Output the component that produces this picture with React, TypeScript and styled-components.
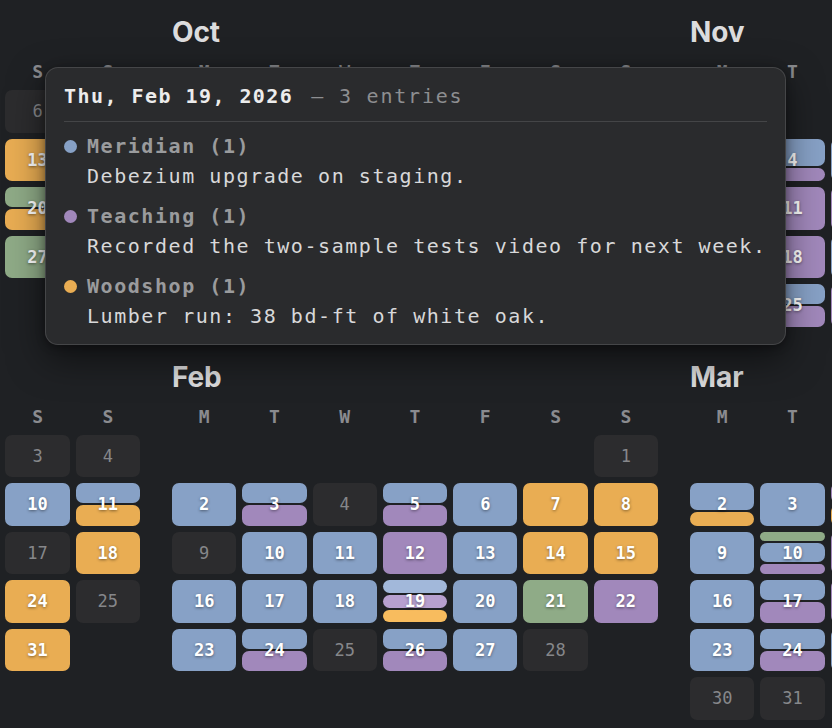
import React, { useLayoutEffect, useRef } from "react";
import styled, { createGlobalStyle } from "styled-components";

const MONO = `"DejaVu Sans Mono", "Liberation Mono", monospace`;
const SANS = `Inter, "Noto Sans", sans-serif`;

const GlobalStyle = createGlobalStyle`
  html, body { margin: 0; padding: 0; background: #1f2124; }
  body { width: 832px; height: 728px; overflow: hidden; }
  * { box-sizing: border-box; }
`;

type Cat = "meridian" | "teaching" | "woodshop" | "garden";

const COLORS: Record<Cat, { base: string; hi: string }> = {
  meridian: { base: "#87a1c6", hi: "#a2b8da" },
  teaching: { base: "#a188bb", hi: "#b7a0cf" },
  woodshop: { base: "#e9ad53", hi: "#f8bc5e" },
  garden: { base: "#8fab87", hi: "#a7c29f" },
};

const KEY: Record<string, Cat> = { b: "meridian", p: "teaching", o: "woodshop", g: "garden" };

type MonthSpec = { year: number; month: number; name: string; days: Record<number, string> };

const MONTHS: MonthSpec[] = [
  {
    year: 2025, month: 8, name: "Sep",
    days: { 1: "b", 2: "b", 3: "bp", 4: "b", 5: "o", 6: "", 7: "o", 8: "b", 9: "p", 10: "b", 11: "bp", 12: "b", 13: "o", 14: "", 15: "b", 16: "p", 17: "b", 18: "b", 19: "bo", 20: "go", 21: "g", 22: "b", 23: "bp", 24: "b", 25: "p", 26: "b", 27: "g", 28: "o", 29: "b", 30: "bp" },
  },
  {
    year: 2025, month: 9, name: "Oct",
    days: { 1: "b", 2: "bp", 3: "b", 4: "o", 5: "", 6: "b", 7: "p", 8: "b", 9: "bp", 10: "b", 11: "o", 12: "g", 13: "b", 14: "p", 15: "b", 16: "b", 17: "bo", 18: "o", 19: "", 20: "b", 21: "bp", 22: "b", 23: "p", 24: "b", 25: "g", 26: "o", 27: "b", 28: "bp", 29: "b", 30: "p", 31: "b" },
  },
  {
    year: 2025, month: 10, name: "Nov",
    days: { 1: "o", 2: "", 3: "b", 4: "bbp", 5: "b", 6: "p", 7: "b", 8: "o", 9: "g", 10: "b", 11: "p", 12: "p", 13: "b", 14: "b", 15: "o", 16: "", 17: "b", 18: "p", 19: "b", 20: "bp", 21: "b", 22: "o", 23: "o", 24: "b", 25: "bp", 26: "p", 27: "b", 28: "b", 29: "", 30: "o" },
  },
  {
    year: 2025, month: 11, name: "Dec",
    days: { 1: "b", 2: "bp", 3: "b", 4: "p", 5: "b", 6: "o", 7: "", 8: "b", 9: "p", 10: "b", 11: "bp", 12: "b", 13: "o", 14: "o", 15: "b", 16: "b", 17: "p", 18: "b", 19: "b", 20: "g", 21: "", 22: "", 23: "", 24: "o", 25: "", 26: "o", 27: "", 28: "", 29: "b", 30: "b", 31: "" },
  },
  {
    year: 2026, month: 0, name: "Jan",
    days: { 1: "", 2: "b", 3: "", 4: "", 5: "b", 6: "bp", 7: "b", 8: "p", 9: "b", 10: "b", 11: "bo", 12: "b", 13: "bp", 14: "b", 15: "b", 16: "p", 17: "", 18: "o", 19: "b", 20: "bp", 21: "b", 22: "b", 23: "p", 24: "o", 25: "", 26: "b", 27: "bp", 28: "b", 29: "b", 30: "p", 31: "o" },
  },
  {
    year: 2026, month: 1, name: "Feb",
    days: { 1: "", 2: "b", 3: "bp", 4: "", 5: "bp", 6: "b", 7: "o", 8: "o", 9: "", 10: "b", 11: "b", 12: "p", 13: "b", 14: "o", 15: "o", 16: "b", 17: "b", 18: "b", 19: "bpo", 20: "b", 21: "g", 22: "p", 23: "b", 24: "bp", 25: "", 26: "bp", 27: "b", 28: "" },
  },
  {
    year: 2026, month: 2, name: "Mar",
    days: { 1: "o", 2: "bbo", 3: "b", 4: "po", 5: "b", 6: "b", 7: "o", 8: "", 9: "b", 10: "gbbp", 11: "p", 12: "b", 13: "b", 14: "o", 15: "", 16: "b", 17: "bp", 18: "p", 19: "b", 20: "b", 21: "g", 22: "", 23: "b", 24: "bp", 25: "b", 26: "p", 27: "b", 28: "", 29: "", 30: "", 31: "" },
  },
  {
    year: 2026, month: 3, name: "Apr",
    days: {},
  },
];

const ACTIVE = { year: 2026, month: 1, day: 19 };
const WEEKDAYS = ["M", "T", "W", "T", "F", "S", "S"];

function parse(code: string) {
  const out: { cat: Cat; weight: number }[] = [];
  for (const ch of code) {
    const cat = KEY[ch];
    const last = out[out.length - 1];
    if (last && last.cat === cat) last.weight++;
    else out.push({ cat, weight: 1 });
  }
  return out;
}

/* ---------- layout ---------- */

const Page = styled.div`
  position: relative;
  width: 832px;
  height: 728px;
  background: #1f2124;
`;

const Viewport = styled.div`
  width: 832px;
  height: 728px;
  overflow: hidden;
`;

const Track = styled.div`
  display: grid;
  grid-template-columns: repeat(4, 486px);
  column-gap: 32px;
  row-gap: 32px;
  align-items: start;
  padding: 14px 24px 24px;
  width: max-content;
`;

const MonthBlock = styled.section`
  display: flex;
  flex-direction: column;
`;

const MonthName = styled.h2`
  margin: 0 0 10px;
  height: 36px;
  line-height: 36px;
  font-family: ${SANS};
  font-weight: 700;
  font-size: 28px;
  letter-spacing: -0.1px;
  color: #dcdcdd;
`;

const WeekRow = styled.div`
  display: grid;
  grid-template-columns: repeat(7, 1fr);
  column-gap: 6px;
  height: 24px;
  margin-bottom: 6px;
`;

const WeekLabel = styled.span`
  text-align: center;
  line-height: 24px;
  font-family: ${MONO};
  font-weight: 700;
  font-size: 18px;
  color: #8a8b8f;
`;

const DayGrid = styled.div`
  display: grid;
  grid-template-columns: repeat(7, 1fr);
  grid-auto-rows: 42.5px;
  gap: 6px;
`;

const Blank = styled.div``;

const Cell = styled.div<{ $empty: boolean }>`
  position: relative;
  display: flex;
  flex-direction: column;
  gap: 2px;
  border-radius: 7px;
  background: ${(p) => (p.$empty ? "#2c2c2e" : "transparent")};
`;

const Stripe = styled.div<{ $color: string; $grow: number }>`
  flex: ${(p) => p.$grow} 1 0;
  min-height: 0;
  border-radius: 7px;
  background: ${(p) => p.$color};
`;

const DayNum = styled.span<{ $empty: boolean }>`
  position: absolute;
  inset: 0;
  display: flex;
  align-items: center;
  justify-content: center;
  font-family: ${MONO};
  font-size: 17px;
  font-weight: ${(p) => (p.$empty ? 400 : 700)};
  color: ${(p) => (p.$empty ? "#86878a" : "#ffffff")};
  text-shadow: ${(p) => (p.$empty ? "none" : "0 1px 3px rgba(0,0,0,0.45)")};
`;

/* ---------- tooltip ---------- */

const Tip = styled.div`
  position: absolute;
  left: 45px;
  top: 67px;
  width: max-content;
  padding: 13px 18px;
  border-radius: 13px;
  border: 1px solid rgba(255, 255, 255, 0.13);
  background: #2a2b2d;
  box-shadow: 0 14px 36px rgba(0, 0, 0, 0.5), 0 2px 8px rgba(0, 0, 0, 0.35);
  font-family: ${MONO};
  font-size: 20px;
  letter-spacing: 1.55px;
  line-height: 30px;
`;

const TipTitle = styled.div`
  white-space: pre;
`;

const TipDate = styled.span`
  color: #ececec;
  font-weight: 700;
  letter-spacing: 1.45px;
`;

const TipCount = styled.span`
  margin-left: 4px;
  color: #8d8e90;
  letter-spacing: 1.8px;
`;

const Rule = styled.hr`
  margin: 10px 0 9px;
  border: 0;
  height: 1px;
  background: #444547;
`;

const EntryList = styled.div`
  display: flex;
  flex-direction: column;
  gap: 10px;
`;

const Entry = styled.div`
  display: grid;
  grid-template-columns: 13px auto;
  column-gap: 10px;
  align-items: center;
`;

const Dot = styled.span<{ $color: string }>`
  width: 13px;
  height: 13px;
  border-radius: 50%;
  background: ${(p) => p.$color};
`;

const EntryHead = styled.div`
  color: #9a9b9d;
  font-weight: 700;
  white-space: pre;
`;

const EntryText = styled.div`
  grid-column: 2;
  color: #d8d8d9;
  white-space: pre;
`;

/* ---------- components ---------- */

function Month({ spec }: { spec: MonthSpec }) {
  const first = new Date(spec.year, spec.month, 1).getDay();
  const offset = (first + 6) % 7;
  const count = new Date(spec.year, spec.month + 1, 0).getDate();
  const blanks = Array.from({ length: offset });
  const days = Array.from({ length: count }, (_, i) => i + 1);
  return (
    <MonthBlock>
      <MonthName>{spec.name}</MonthName>
      <WeekRow>
        {WEEKDAYS.map((w, i) => (
          <WeekLabel key={i}>{w}</WeekLabel>
        ))}
      </WeekRow>
      <DayGrid>
        {blanks.map((_, i) => (
          <Blank key={`b${i}`} />
        ))}
        {days.map((d) => {
          const groups = parse(spec.days[d] ?? "");
          const empty = groups.length === 0;
          const active =
            spec.year === ACTIVE.year && spec.month === ACTIVE.month && d === ACTIVE.day;
          return (
            <Cell key={d} $empty={empty}>
              {groups.map((g, i) => (
                <Stripe
                  key={i}
                  $grow={g.weight}
                  $color={active ? COLORS[g.cat].hi : COLORS[g.cat].base}
                />
              ))}
              <DayNum $empty={empty}>{d}</DayNum>
            </Cell>
          );
        })}
      </DayGrid>
    </MonthBlock>
  );
}

const ENTRIES: { cat: Cat; name: string; text: string }[] = [
  { cat: "meridian", name: "Meridian (1)", text: "Debezium upgrade on staging." },
  { cat: "teaching", name: "Teaching (1)", text: "Recorded the two-sample tests video for next week." },
  { cat: "woodshop", name: "Woodshop (1)", text: "Lumber run: 38 bd-ft of white oak." },
];

export default function App() {
  const ref = useRef<HTMLDivElement>(null);
  useLayoutEffect(() => {
    if (ref.current) ref.current.scrollLeft = 370;
  }, []);
  return (
    <Page>
      <GlobalStyle />
      <Viewport ref={ref}>
        <Track>
          {MONTHS.map((m) => (
            <Month key={`${m.year}-${m.month}`} spec={m} />
          ))}
        </Track>
      </Viewport>
      <Tip>
        <TipTitle>
          <TipDate>Thu, Feb 19, 2026</TipDate>
          <TipCount>{" — 3 entries"}</TipCount>
        </TipTitle>
        <Rule />
        <EntryList>
          {ENTRIES.map((e) => (
            <Entry key={e.name}>
              <Dot $color={COLORS[e.cat].base} />
              <EntryHead>{e.name}</EntryHead>
              <EntryText>{e.text}</EntryText>
            </Entry>
          ))}
        </EntryList>
      </Tip>
    </Page>
  );
}
